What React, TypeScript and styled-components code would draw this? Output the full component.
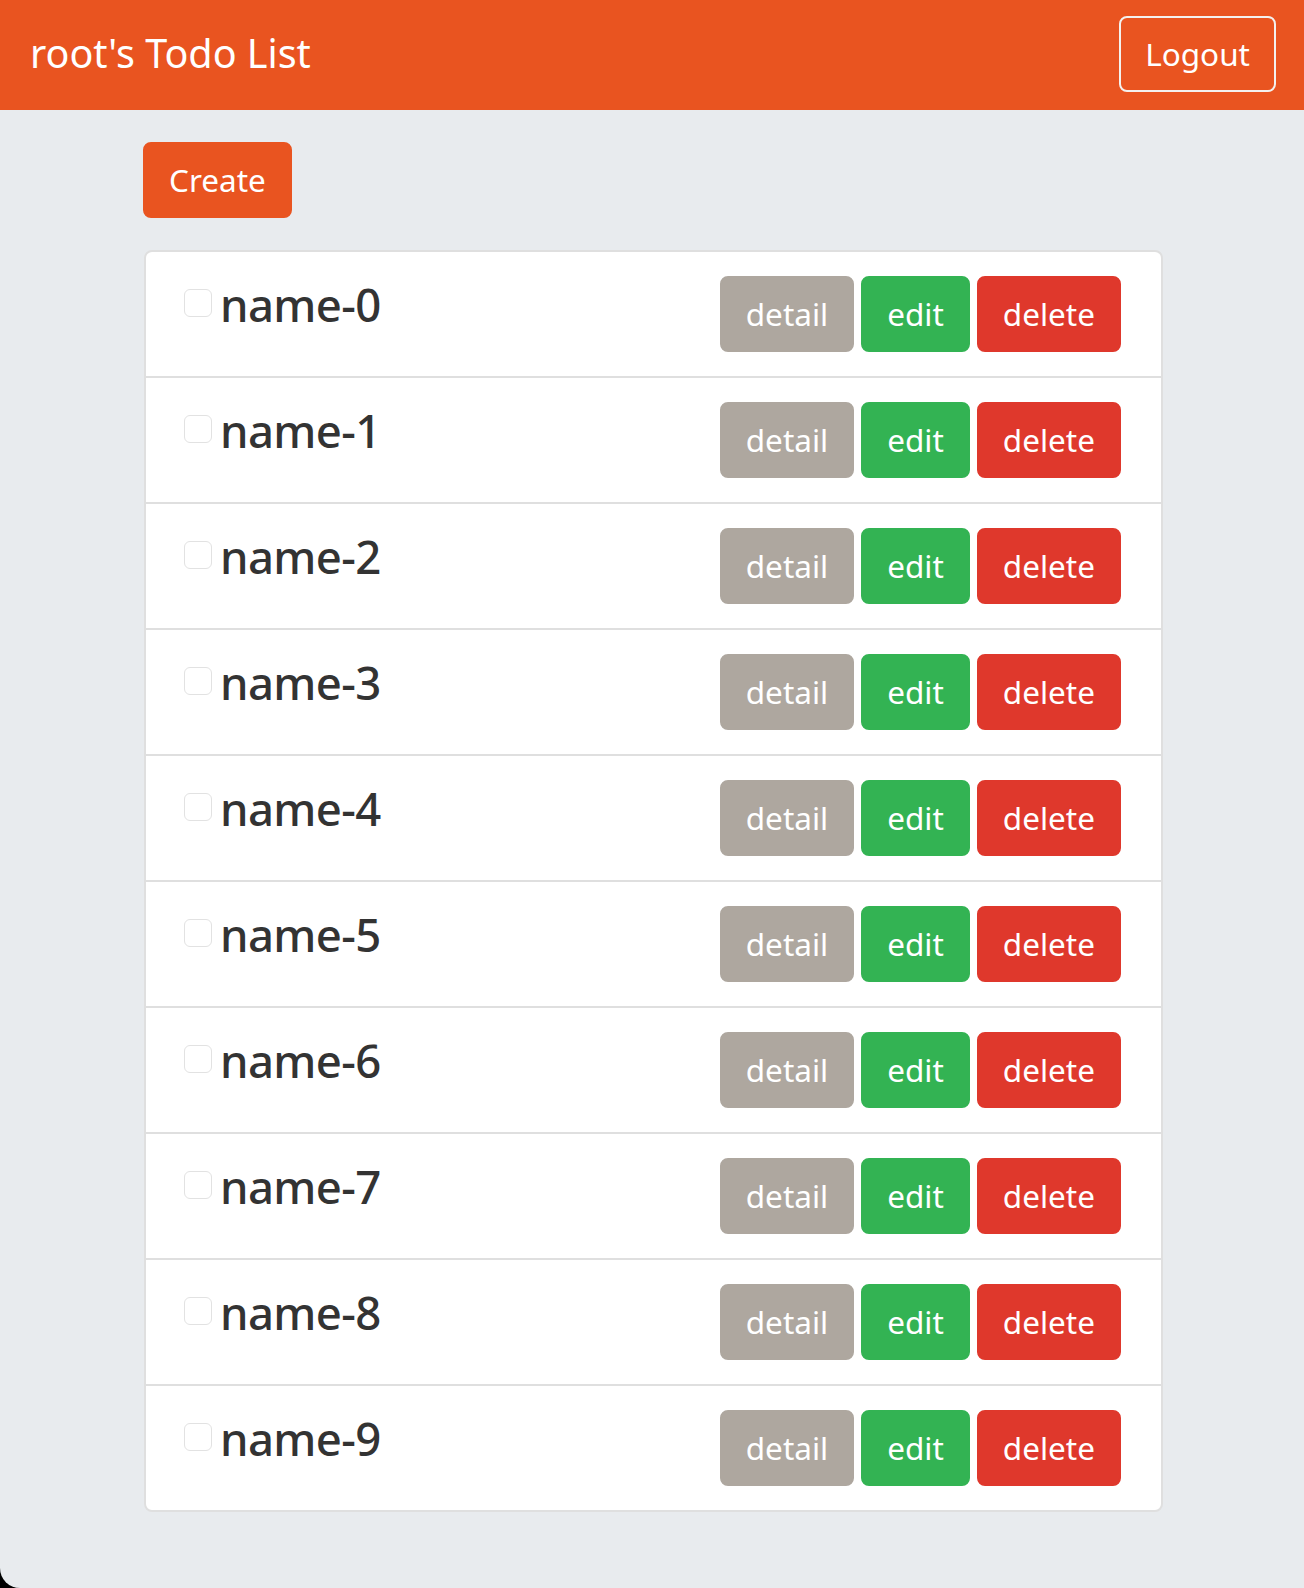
import React from "react";
import styled, { createGlobalStyle } from "styled-components";

const GlobalStyle = createGlobalStyle`
  html, body {
    margin: 0;
    padding: 0;
    background: #000;
  }
  body {
    font-family: "Noto Sans", "Open Sans", "DejaVu Sans", sans-serif;
    color: #333;
  }
`;

const Page = styled.div`
  min-height: 1588px;
  background: #e8ebee;
  border-bottom-left-radius: 20px;
`;

const Navbar = styled.nav`
  height: 110px;
  box-sizing: border-box;
  padding: 0 28px 0 30px;
  background: #e95420;
  display: flex;
  align-items: center;
  justify-content: space-between;
`;

const Brand = styled.div`
  color: #fff;
  font-size: 39.5px;
  line-height: 1;
  margin-top: -2px;
`;

type Variant = "primary" | "secondary" | "success" | "danger" | "outline";

const borders: Record<Variant, string> = {
  primary: "#e95420",
  secondary: "#aea79f",
  success: "#33b353",
  danger: "#df382c",
  outline: "#f4f1ee",
};

const fills: Record<Variant, string> = {
  primary: "#e95420",
  secondary: "#aea79f",
  success: "#33b353",
  danger: "#df382c",
  outline: "transparent",
};

const Button = styled.button<{ $variant: Variant }>`
  font-family: inherit;
  font-size: 31.5px;
  line-height: 48px;
  padding: 12px 24px;
  border-radius: 8px;
  cursor: pointer;
  color: #fff;
  border: 2px solid ${({ $variant }) => borders[$variant]};
  background: ${({ $variant }) => fills[$variant]};
`;

const LogoutButton = styled(Button)`
  margin-top: -2px;
`;

const Container = styled.main`
  width: 1020px;
  margin: 0 auto;
  padding: 32px 0 0 0;
  display: flex;
  flex-direction: column;
  align-items: flex-start;
  gap: 32px;
`;

const CreateButton = styled(Button)`
  margin-left: 1px;
`;

const List = styled.ul`
  list-style: none;
  margin: 0;
  padding: 0;
  width: 1015px;
  margin-left: 2px;
  background: #fff;
  border: 2px solid #dfdfdf;
  border-radius: 8px;
  overflow: hidden;
`;

const Row = styled.li`
  display: flex;
  justify-content: space-between;
  align-items: flex-start;
  padding: 24px 40px 24px 38px;
  & + & {
    border-top: 2px solid #dfdfdf;
  }
`;

const Label = styled.label`
  display: flex;
  align-items: center;
  gap: 8px;
`;

const Check = styled.span`
  width: 26px;
  height: 26px;
  border: 1px solid #e2e2e2;
  border-radius: 6px;
  background: #fff;
  margin-top: -4px;
`;

const Name = styled.h4`
  margin: 0;
  font-size: 45.5px;
  font-weight: 500;
  line-height: 57px;
  color: #333;
  letter-spacing: -0.6px;
`;

const Actions = styled.div`
  display: flex;
  gap: 7px;
`;

const items = Array.from({ length: 10 }, (_, i) => `name-${i}`);

export default function App() {
  return (
    <>
      <GlobalStyle />
      <Page>
        <Navbar>
          <Brand>root's Todo List</Brand>
          <LogoutButton $variant="outline">Logout</LogoutButton>
        </Navbar>
        <Container>
          <CreateButton $variant="primary">Create</CreateButton>
          <List>
            {items.map((name) => (
              <Row key={name}>
                <Label>
                  <Check />
                  <Name>{name}</Name>
                </Label>
                <Actions>
                  <Button $variant="secondary">detail</Button>
                  <Button $variant="success">edit</Button>
                  <Button $variant="danger">delete</Button>
                </Actions>
              </Row>
            ))}
          </List>
        </Container>
      </Page>
    </>
  );
}
